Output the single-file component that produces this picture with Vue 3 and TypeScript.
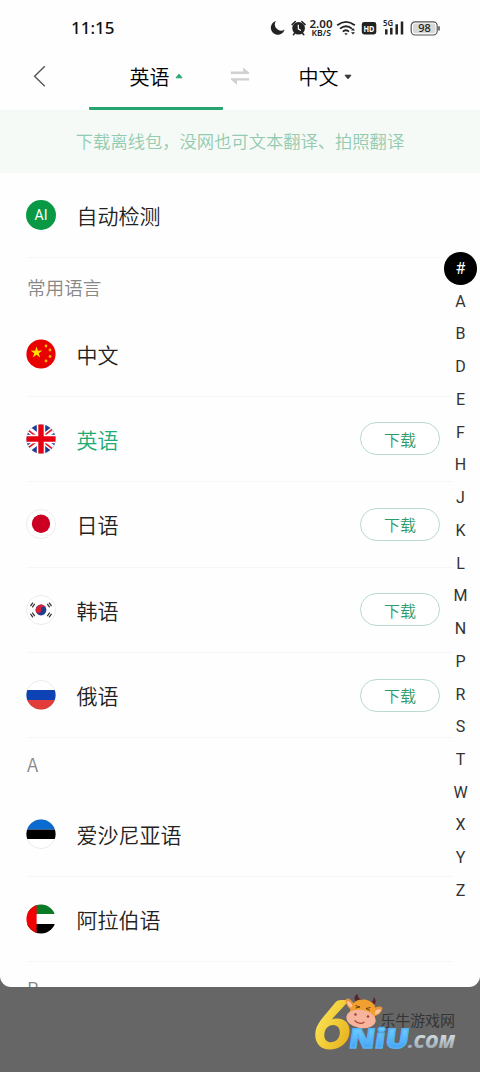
<script setup lang="ts">
interface Language {
  name: string
  flag: string
  download?: boolean
  active?: boolean
}
interface Section {
  title: string
  items: Language[]
}

const sections: Section[] = [
  {
    title: '常用语言',
    items: [
      { name: '中文', flag: 'cn' },
      { name: '英语', flag: 'gb', download: true, active: true },
      { name: '日语', flag: 'jp', download: true },
      { name: '韩语', flag: 'kr', download: true },
      { name: '俄语', flag: 'ru', download: true },
    ],
  },
  {
    title: 'A',
    items: [
      { name: '爱沙尼亚语', flag: 'ee' },
      { name: '阿拉伯语', flag: 'ae' },
    ],
  },
  { title: 'B', items: [] },
]
const letters: string[] = [...'#ABDEFHJKLMNPRSTWXYZ']
const smallStars = [
  [20, 7],
  [24, 11],
  [24, 17.5],
  [20, 22],
]
const trigrams = [
  [6.6, 10, -56],
  [23.4, 10, 56],
  [6.6, 20, 56],
  [23.4, 20, -56],
]
</script>

<template>
  <div class="screen">
    <div class="sheet">
      <header class="status">
        <span class="time">11:15</span>
        <svg class="status-icons" width="176" height="24" viewBox="0 0 176 24">
          <path d="M9 6A7 7 0 1 0 17.6 14.6 6.2 6.2 0 0 1 9 6Z" fill="#222" />
          <circle cx="31.6" cy="13.3" r="6.3" fill="#222" />
          <path d="M25.1 9.6l3.3-3.1M38.1 9.6L34.8 6.5M27.6 18.2l-1.2 1.5M35.6 18.2l1.2 1.5" stroke="#222" stroke-width="1.5" stroke-linecap="round" />
          <path d="M31.3 9.8v4l2.6 1.6" fill="none" stroke="#fff" stroke-width="1.2" />
          <text x="42.5" y="12.6" class="speed" textLength="23" lengthAdjust="spacingAndGlyphs">2.00</text>
          <text x="44.5" y="20.8" class="unit" textLength="19.5" lengthAdjust="spacingAndGlyphs">KB/S</text>
          <g fill="none" stroke="#222" stroke-width="1.8">
            <path d="M70.2 10.2Q79 3.4 87.8 10.2" />
            <path d="M73 13.6Q79 8.8 85 13.6" />
            <path d="M75.8 16.6Q79 14 82 16.6" />
          </g>
          <path d="M77.3 18.2h3.4L79 20.2Z" fill="#222" />
          <path d="M84 15.4l2-2.3 2 2.3ZM84 17.2l2 2.3 2-2.3Z" fill="#222" />
          <rect x="94.8" y="7" width="14.5" height="12.5" rx="2.4" fill="#222" />
          <text x="96.5" y="16.8" class="hd" textLength="11" lengthAdjust="spacingAndGlyphs">HD</text>
          <text x="116" y="11.4" class="net" textLength="10" lengthAdjust="spacingAndGlyphs">5G</text>
          <path d="M119.3 14.2v5.3M124.3 12.8v6.7M129.7 9.3v10.2M135 6.6v12.9" stroke="#222" stroke-width="2.5" />
          <rect x="144.2" y="6.8" width="26" height="13.2" rx="4" fill="#fff" stroke="#555" stroke-width="1.2" />
          <rect x="146" y="8.5" width="22.4" height="9.8" rx="2.4" fill="#d8d8d8" />
          <path d="M172 11.2v4.4" stroke="#555" stroke-width="1.6" />
          <text x="151.2" y="17.3" class="battery" textLength="12.5" lengthAdjust="spacingAndGlyphs">98</text>
        </svg>
      </header>

      <nav class="tabs">
        <svg class="back" width="16" height="24" viewBox="0 0 16 24">
          <path d="M12.8 2.2L2.6 12.3l10.2 9.9" fill="none" stroke="#555" stroke-width="1.4" />
        </svg>
        <div class="tab tab-on">
          <span>英语</span>
          <svg width="8" height="6" viewBox="0 0 8 6"><path d="M1 4.8L4 1.2l3 3.6Z" fill="#27a570" stroke="#27a570" stroke-linejoin="round" /></svg>
        </div>
        <svg class="swap" width="20" height="20" viewBox="0 0 20 20">
          <g fill="#d0d0d0"><path d="M.8 5.6h12.4V1.4l5.8 5v1.6H.8ZM19.2 12.2v2.4H7v4.2L1 13.8v-1.6Z" /></g>
        </svg>
        <div class="tab tab-off">
          <span>中文</span>
          <svg width="8" height="6" viewBox="0 0 8 6"><path d="M1 1.2h6L4 4.8Z" fill="#333" stroke="#333" stroke-linejoin="round" /></svg>
        </div>
      </nav>

      <div class="banner">下载离线包，没网也可文本翻译、拍照翻译</div>

      <main class="list">
        <div class="row">
          <span class="auto">AI</span>
          <span class="name">自动检测</span>
        </div>
        <section v-for="section in sections" :key="section.title">
          <h2 class="title" :class="{ initial: section.title.length === 1 }">{{ section.title }}</h2>
          <div v-for="item in section.items" :key="item.name" class="row">
            <svg class="flag" width="30" height="30" viewBox="0 0 30 30">
              <defs>
                <clipPath :id="'round-' + item.flag"><circle cx="15" cy="15" r="14.6" /></clipPath>
              </defs>
              <g :clip-path="`url(#round-${item.flag})`">
                <template v-if="item.flag === 'cn'">
                  <rect width="30" height="30" fill="#e80000" />
                  <path d="M10.5 7.4l1.4 4.3 4.5-.1-3.7 2.6 1.5 4.3-3.7-2.7-3.7 2.7 1.4-4.3-3.6-2.6 4.5.1Z" fill="#ffe000" />
                  <circle v-for="star in smallStars" :key="star.join()" :cx="star[0]" :cy="star[1]" r="1.4" fill="#f8b500" />
                </template>
                <template v-else-if="item.flag === 'gb'">
                  <rect width="30" height="30" fill="#1d4091" />
                  <path d="M0 3.5L30 26.5M0 26.5L30 3.5" stroke="#fff" stroke-width="6" />
                  <path d="M0 4.5L30 27.5M0 25.5L30 2.5" stroke="#e41e2a" stroke-width="1.6" />
                  <path d="M15 0v30M0 15h30" stroke="#fff" stroke-width="8.4" />
                  <path d="M15 0v30M0 15h30" stroke="#e50012" stroke-width="5.4" />
                </template>
                <template v-else-if="item.flag === 'jp'">
                  <rect width="30" height="30" fill="#fff" />
                  <circle cx="15" cy="14.8" r="9.2" fill="#cc0022" />
                </template>
                <template v-else-if="item.flag === 'kr'">
                  <rect width="30" height="30" fill="#fff" />
                  <circle cx="15" cy="15" r="5.4" fill="#1e3d91" />
                  <path d="M9.6 15a5.4 5.4 0 0 1 10.8 0 2.7 2.7 0 0 0-5.4 0 2.7 2.7 0 0 1-5.4 0Z" fill="#d22439" transform="rotate(-10 15 15)" />
                  <g v-for="mark in trigrams" :key="mark.join()" :transform="`translate(${mark[0]} ${mark[1]}) rotate(${mark[2]})`">
                    <path d="M-2.2-1.1h4.4M-2.2 1.1h4.4" stroke="#333" stroke-width="1.2" />
                  </g>
                </template>
                <template v-else-if="item.flag === 'ru'">
                  <rect width="30" height="30" fill="#fff" />
                  <rect y="10" width="30" height="10" fill="#0d43b5" />
                  <rect y="20" width="30" height="10" fill="#e23d3a" />
                </template>
                <template v-else-if="item.flag === 'ee'">
                  <rect width="30" height="30" fill="#fff" />
                  <rect width="30" height="10.6" fill="#0a6bd0" />
                  <rect y="10.6" width="30" height="9.4" fill="#000" />
                </template>
                <template v-else>
                  <rect width="30" height="30" fill="#fff" />
                  <rect width="30" height="10" fill="#0a7a26" />
                  <rect y="20" width="30" height="10" fill="#000" />
                  <rect width="10.6" height="30" fill="#f30000" />
                </template>
              </g>
              <circle v-if="['jp', 'kr', 'ru', 'ee'].includes(item.flag)" cx="15" cy="15" r="14.5" fill="none" stroke="#000" stroke-opacity=".1" stroke-width=".8" />
            </svg>
            <span class="name" :class="{ active: item.active }">{{ item.name }}</span>
            <button v-if="item.download" class="download">下载</button>
          </div>
        </section>
      </main>

      <aside class="index">
        <span v-for="letter in letters" :key="letter" class="letter" :class="{ current: letter === '#' }">{{ letter }}</span>
      </aside>
    </div>

    <footer class="dim">
      <svg class="logo" width="150" height="66" viewBox="0 0 150 66">
        <defs>
          <linearGradient id="gold" x1="0" y1="0" x2="1" y2="1">
            <stop offset="0" stop-color="#fff27a" />
            <stop offset=".5" stop-color="#f4d13c" />
            <stop offset="1" stop-color="#e2a514" />
          </linearGradient>
          <linearGradient id="sky" x1="0" y1="0" x2="0" y2="1">
            <stop offset=".2" stop-color="#72d0ff" />
            <stop offset="1" stop-color="#3594ed" />
          </linearGradient>
          <linearGradient id="steel" x1="0" y1="0" x2="0" y2="1">
            <stop offset=".2" stop-color="#d5dde3" />
            <stop offset="1" stop-color="#8b98a2" />
          </linearGradient>
        </defs>
        <text x="1" y="55.5" class="six" textLength="38" lengthAdjust="spacingAndGlyphs" fill="url(#gold)">6</text>
        <text transform="translate(37 55) skewX(-8)" class="niu" textLength="60" lengthAdjust="spacingAndGlyphs" fill="url(#sky)" stroke="#55b3f8" stroke-width="1.4">NiU</text>
        <text x="97" y="55" class="com" textLength="47" lengthAdjust="spacingAndGlyphs" fill="url(#steel)">.COM</text>
        <text x="69.5" y="32.5" class="brand" textLength="74.5">乐牛游戏网</text>
        <g>
          <path d="M45.5 9.5C42 6 43.500 2 47 1c-1 3.500 2 5.500 6 6.500ZM58 9c3.500 0 5-2 4.500-5 3.500 3 2.500 6.500-.5 9Z" fill="#57252b" />
          <path d="M44 13C41 7 37 4 34.800 6.500 34 11 38 16.500 43 18ZM61 17c4-4 9-4.500 10.500-2C71 20 66 23.500 60 24Z" fill="#e8953d" />
          <path d="M42.500 14C40 9.500 37.500 7.500 36 8.500c0 3 3 6 6 7ZM62.500 19.500c3-3 6-4 7.500-2.500-1 3-4 4.500-7.500 5Z" fill="#ffc5a0" />
          <path d="M42 11C46 4.500 59 5.500 63.500 12 65 17 64 26 62.500 30L36.500 26C38 21 39.500 15 42 11Z" fill="#efa02f" />
          <ellipse cx="50" cy="26" rx="14.800" ry="9" transform="rotate(9 50 26)" fill="#f5b49b" />
          <path d="M44.500 12.500l4.500 1.500-4.500 1M59.500 14.500l-4.500 1 4 2" stroke="#693014" stroke-width=".9" fill="none" />
          <path d="M43.500 27.500q5 5 10 1.500" stroke="#a84740" stroke-width="1.100" fill="none" />
          <circle cx="44.500" cy="21.500" r="1.200" fill="#9e3932" /><circle cx="57" cy="23.500" r="1.200" fill="#9e3932" />
        </g>
      </svg>
    </footer>
  </div>
</template>

<style>
body {
  background: #666;
}
</style>

<style scoped>
.screen {
  display: flex;
  flex-direction: column;
  width: 480px;
  height: 1072px;
  overflow: hidden;
  background: #666;
  font-family: Roboto, "Noto Sans CJK SC", sans-serif;
}
.sheet {
  position: relative;
  height: 987px;
  flex: none;
  overflow: hidden;
  background: #fefefe;
  border-radius: 0 0 11px 11px;
}
.status {
  display: flex;
  align-items: center;
  justify-content: space-between;
  height: 40px;
  padding: 14px 37px 0 71px;
  box-sizing: border-box;
}
.time {
  padding-top: 2px;
  font: 500 17px/24px "Noto Sans", sans-serif;
  color: #111;
}
.status-icons text {
  font-family: "Noto Sans", sans-serif;
  font-weight: 600;
  fill: #222;
}
.status-icons .speed { font-size: 11.5px; }
.status-icons .unit { font-size: 8.5px; }
.status-icons .hd { font-size: 9.5px; font-weight: 700; fill: #fff; }
.status-icons .net { font-size: 8.5px; }
.status-icons .battery { font-size: 11px; font-weight: 500; }
.tabs {
  display: flex;
  align-items: center;
  height: 70px;
  padding-left: 32px;
  box-sizing: border-box;
}
.back {
  margin: 2px 41px 0 0;
}
.tab {
  display: flex;
  align-items: center;
  justify-content: center;
  gap: 5px;
  width: 134px;
  height: 70px;
  padding-top: 5px;
  box-sizing: border-box;
  color: #000;
  font-size: 20px;
  font-weight: 350;
}
.tab-on {
  border-bottom: 3px solid #27a570;
  border-radius: 1px;
}
.tab-off {
  padding-top: 3px;
}
.swap {
  margin: 2px 8px 0 7px;
}
.banner {
  height: 63px;
  background: #f5faf7;
  color: #93cbb0;
  font-size: 17.3px;
  font-weight: 350;
  line-height: 64px;
  text-align: center;
}
.list {
  padding: 0 27px;
}
.row {
  display: flex;
  align-items: center;
  height: 85.4px;
  padding-right: 13px;
  box-sizing: border-box;
  border-bottom: 1px solid #f7f7f7;
}
.auto,
.flag {
  flex: none;
  width: 30px;
  height: 30px;
  margin-left: -1px;
}
.auto {
  border-radius: 50%;
  background: #099944;
  color: #fff;
  font-size: 14px;
  line-height: 31px;
  text-align: center;
}
.name {
  margin-left: 20.5px;
  color: #222;
  font-size: 21px;
  font-weight: 350;
}
.active {
  color: #1dab74;
}
.title {
  height: 53px;
  margin: 0;
  padding-top: 4px;
  box-sizing: border-box;
  color: #888;
  font-family: "Noto Sans CJK SC", sans-serif;
  font-size: 18.6px;
  font-weight: 350;
  line-height: 50px;
}
.initial {
  padding-top: 1px;
}
.download {
  width: 80px;
  height: 33px;
  margin-left: auto;
  padding: 0;
  border: 1px solid #b9d9ce;
  border-radius: 17px;
  background: #fff;
  color: #2b9c6b;
  font-family: inherit;
  font-size: 16px;
  font-weight: 350;
}
.index {
  position: absolute;
  top: 252px;
  right: 3px;
  display: flex;
  flex-direction: column;
  width: 33px;
}
.letter {
  height: 32.74px;
  color: #333;
  font-size: 16px;
  line-height: 34px;
  text-align: center;
}
.current {
  border-radius: 50%;
  background: #000;
  color: #fff;
}
.dim {
  display: flex;
  justify-content: flex-end;
  padding: 6px 19px 0 0;
}
.logo {
  overflow: visible;
}
.logo text {
  font-family: "Open Sans", sans-serif;
  font-weight: 800;
  font-style: italic;
}
.logo .six {
  font-family: Lato, sans-serif;
  font-size: 67px;
  font-weight: 900;
}
.logo .niu {
  font-size: 27px;
  font-style: normal;
}
.logo .com { font-size: 18px; }
.logo .brand {
  font-family: "Noto Sans CJK SC", sans-serif;
  font-size: 15px;
  font-style: normal;
  font-weight: 400;
  fill: #353535;
}
</style>
